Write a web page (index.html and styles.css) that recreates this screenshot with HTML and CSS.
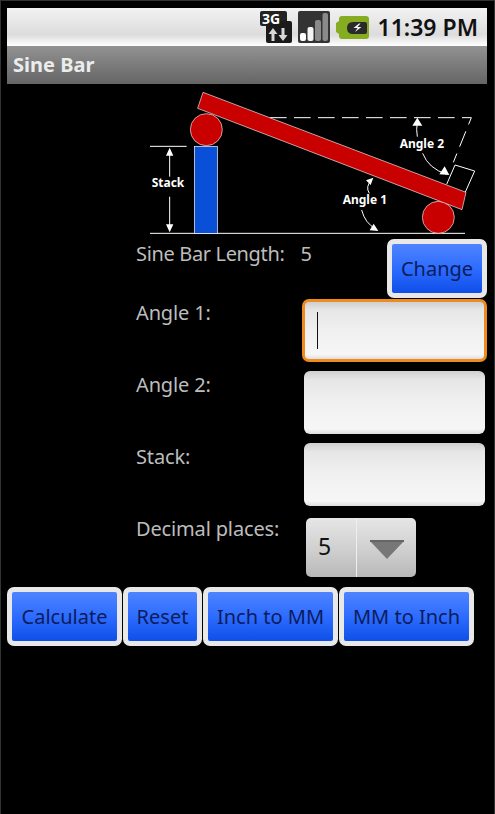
FILE: index.html
```html
<!DOCTYPE html>
<html lang="en">
<head>
<meta charset="utf-8">
<title>Sine Bar</title>
<link rel="stylesheet" href="styles.css">
</head>
<body>
<div class="phone">
  <header class="status">
    <svg class="ic-3g" viewBox="0 -4 32 36" width="32" height="36">
      <rect x="0" y="0" width="27" height="15" rx="2" fill="#222"/>
      <rect x="6" y="10" width="26" height="22" rx="2" fill="#1a1a1a"/>
      <text x="2" y="13" class="g3">3G</text>
      <path d="M13 17l-4.500 6h3v7h3v-7h3zM23 30l4.500-6h-3v-7h-3v7h-3z" fill="#d8d8d8"/>
    </svg>
    <svg class="ic-signal" viewBox="0 0 32 32" width="32" height="32">
      <rect width="32" height="32" rx="2" fill="#333"/>
      <rect x="2" y="22" width="6" height="8" rx="2" fill="#fff"/>
      <rect x="9.500" y="16" width="6" height="14" rx="2" fill="#f4f4f4"/>
      <rect x="17" y="9" width="6" height="21" rx="2" fill="#8a8a8a"/>
      <rect x="24.500" y="2" width="5.500" height="28" rx="2" fill="#8a8a8a"/>
    </svg>
    <svg class="ic-batt" viewBox="0 0 33 23" width="33" height="23">
      <path d="M0 7l3-2V3q0-3 3-3h24q3 0 3 3v17q0 3-3 3H6q-3 0-3-3v-2l-3-2z" fill="#86ad22"/>
      <path d="M17 6h12q2 0 2 2v8q0 2-2 2H17q-6 0-6-6t6-6z" fill="#2a2a2a"/>
      <path d="M23 7.500l-5.500 4.500h4l-2.500 4 6.500-5h-4l3-3.500z" fill="#f2f2f2"/>
    </svg>
    <span class="time">11:39 PM</span>
  </header>
  <div class="titlebar">Sine Bar</div>
  <main class="content">
    <svg class="diagram" viewBox="0 0 1050 480" width="350" height="160">
      <g fill="none" stroke="#fff" stroke-width="3">
        <path d="M60 184H170M60 445H1005"/>
        <path d="M420 98H1024L970 232" stroke-dasharray="50 22"/>
        <path d="M975 240L1034 258 1002 330M975 240L950 298"/>
        <path d="M119 195V275M119 335V435"/>
        <path d="M862 110Q858 135 862 155M878 205Q895 250 950 268"/>
        <path d="M725 285Q705 305 718 325M695 375Q705 415 738 432"/>
      </g>
      <path d="M119 188l-11 24h22zM119 442l-11-24h22zM862 98l-15 24h30zM958 270l-30-2 16-24zM730 278l-22 8 14 14zM745 438l-26-2 12-20z" fill="#fff"/>
      <rect x="193" y="184" width="69" height="261" fill="#0a4fd8" stroke="#fff" stroke-width="2"/>
      <circle cx="229" cy="134" r="48" fill="#c80000" stroke="#eee" stroke-width="2"/>
      <circle cx="925" cy="397" r="48" fill="#c80000" stroke="#eee" stroke-width="2"/>
      <path d="M219 22L1008 322 996 374 203 70z" fill="#c80000" stroke="#eee" stroke-width="2"/>
      <text class="dlabel" x="65" y="307">Stack</text>
      <text class="dlabel" x="638" y="356">Angle 1</text>
      <text class="dlabel" x="809" y="188">Angle 2</text>
    </svg>
    <div class="form">
      <div class="row row-len">
        <div class="len"><span>Sine Bar Length:</span><span class="len-val">5</span></div>
        <button class="btn btn-change" type="button">Change</button>
      </div>
      <div class="row">
        <label class="lbl">Angle 1:</label>
        <div class="input focused"><i class="caret"></i></div>
      </div>
      <div class="row">
        <label class="lbl">Angle 2:</label>
        <div class="input"></div>
      </div>
      <div class="row">
        <label class="lbl">Stack:</label>
        <div class="input"></div>
      </div>
      <div class="row row-dec">
        <label class="lbl">Decimal places:</label>
        <div class="spinner">
          <span class="spin-val">5</span>
          <span class="spin-arrow"><svg viewBox="0 0 34 20" width="34" height="20"><path d="M0 1H34L17 19z" fill="#777"/><path d="M0 0H34V2H0z" fill="#666"/></svg></span>
        </div>
      </div>
    </div>
  </main>
  <div class="actions">
    <button class="btn b-calc" type="button">Calculate</button>
    <button class="btn b-reset" type="button">Reset</button>
    <button class="btn b-i2m" type="button">Inch to MM</button>
    <button class="btn b-m2i" type="button">MM to Inch</button>
  </div>
</div>
</body>
</html>
```
FILE: styles.css
```css
* { box-sizing: border-box; }
html, body { margin: 0; height: 100%; background: #000; }
body { font-family: "Noto Sans", "Open Sans", sans-serif; overflow: hidden; }
.phone {
  width: 495px; height: 814px;
  background: #000; border: 1px solid #333; border-bottom: 0;
  padding: 7px 7px 0 6px;
}
.status {
  height: 38px; display: flex; align-items: center; justify-content: flex-end;
  padding-right: 9px;
  background: linear-gradient(#f2f2f2 0, #e6e6e6 40%, #dcdcdc 70%, #eee 85%, #fff 100%);
}
.ic-3g { margin: 0 6px 4px 0; }
.ic-signal { margin-right: 6px; }
.ic-batt { margin-right: 9px; }
.g3 { font: bold 14px "Noto Sans", sans-serif; fill: #fff; }
.time { font-size: 23px; font-weight: 600; color: #111; line-height: 38px; white-space: nowrap; }
.titlebar {
  height: 38px; padding-left: 6px; line-height: 37px;
  font-size: 20px; font-weight: 700; color: #ececec;
  background: linear-gradient(#929292, #656565);
}
.content { padding-left: 123px; }
.diagram { display: block; margin-top: 1px; }
.form { margin-top: -6px; padding-left: 6px; }
.row { display: grid; grid-template-columns: 166px 1fr; height: 72px; }
.lbl, .len { font-size: 20px; color: #bdbdbd; line-height: 28px; letter-spacing: -.15px; }
.row-len { height: 60px; grid-template-columns: 1fr 100px; }
.len { display: flex; letter-spacing: -.35px; padding-top: 1px; }
.len-val { margin-left: 16px; }
.input {
  width: 181px; height: 63px; margin-left: 2px; border-radius: 6px;
  background: linear-gradient(#cfcfcf 0, #e6e6e6 14%, #f0f0f0 50%, #f6f6f6 92%, #dedede 100%);
  display: flex; align-items: center;
}
.input.focused {
  width: 185px; margin-left: 0; border: 3px solid #ee8a1e; border-radius: 7px;
  padding-left: 12px;
}
.caret { display: block; width: 1px; height: 37px; background: #111; }
.spinner {
  width: 110px; height: 59px; margin: 3px 0 0 4px; border-radius: 5px; display: flex;
  background: linear-gradient(#e6e6e6, #cfcfcf 55%, #b8b8b8);
}
.spin-val { width: 51px; border-right: 1px solid #eee; font-size: 23px; color: #111; line-height: 56px; padding-left: 12px; }
.spin-arrow { flex: 1; display: flex; align-items: center; justify-content: center; padding-top: 5px; }
.spin-arrow svg { display: block; }
.btn {
  height: 59px; padding: 0; font-family: inherit; font-size: 20px; color: #0c1c5c;
  border: 5px solid #e8e8e8; border-radius: 7px;
  background: linear-gradient(#4f84ff 0, #2d6cff 50%, #0f4fe8 100%);
  outline: 0;
}
.btn-change { width: 100px; }
.actions { display: flex; gap: 1px; }
.b-calc { width: 115px; }
.b-reset { width: 79px; }
.b-i2m, .b-m2i { width: 135px; }
.dlabel { font: 700 36px "Noto Sans", sans-serif; fill: #fff; }
```
